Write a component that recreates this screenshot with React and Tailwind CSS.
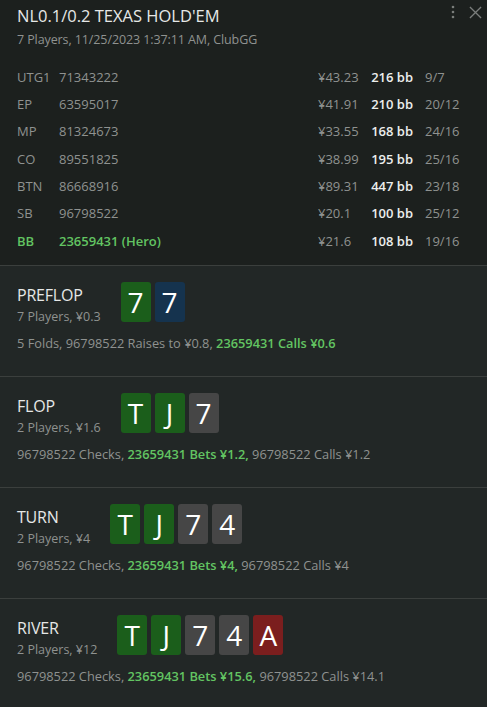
// App.jsx
import React from 'react'

const players = [
  { pos: 'UTG1', id: '71343222', stack: '¥43.23', bb: '216 bb', hands: '9/7' },
  { pos: 'EP', id: '63595017', stack: '¥41.91', bb: '210 bb', hands: '20/12' },
  { pos: 'MP', id: '81324673', stack: '¥33.55', bb: '168 bb', hands: '24/16' },
  { pos: 'CO', id: '89551825', stack: '¥38.99', bb: '195 bb', hands: '25/16' },
  { pos: 'BTN', id: '86668916', stack: '¥89.31', bb: '447 bb', hands: '23/18' },
  { pos: 'SB', id: '96798522', stack: '¥20.1', bb: '100 bb', hands: '25/12' },
  { pos: 'BB', id: '23659431 (Hero)', stack: '¥21.6', bb: '108 bb', hands: '19/16', hero: true },
]

const cardColors = {
  green: 'bg-[#1b5e1b]',
  blue: 'bg-[#15334e]',
  gray: 'bg-[#464646]',
  red: 'bg-[#7b1e1e]',
}

const streets = [
  {
    name: 'PREFLOP',
    info: '7 Players, ¥0.3',
    cards: [['7', 'green'], ['7', 'blue']],
    actions: [
      { text: '5 Folds, 96798522 Raises to ¥0.8, ' },
      { text: '23659431 Calls ¥0.6', hero: true },
    ],
  },
  {
    name: 'FLOP',
    info: '2 Players, ¥1.6',
    cards: [['T', 'green'], ['J', 'green'], ['7', 'gray']],
    actions: [
      { text: '96798522 Checks, ' },
      { text: '23659431 Bets ¥1.2,', hero: true },
      { text: ' 96798522 Calls ¥1.2' },
    ],
  },
  {
    name: 'TURN',
    info: '2 Players, ¥4',
    cards: [['T', 'green'], ['J', 'green'], ['7', 'gray'], ['4', 'gray']],
    actions: [
      { text: '96798522 Checks, ' },
      { text: '23659431 Bets ¥4,', hero: true },
      { text: ' 96798522 Calls ¥4' },
    ],
  },
  {
    name: 'RIVER',
    info: '2 Players, ¥12',
    cards: [['T', 'green'], ['J', 'green'], ['7', 'gray'], ['4', 'gray'], ['A', 'red']],
    actions: [
      { text: '96798522 Checks, ' },
      { text: '23659431 Bets ¥15.6,', hero: true },
      { text: ' 96798522 Calls ¥14.1' },
    ],
  },
]

function Card({ rank, color }) {
  return (
    <div className={`w-[30px] h-[40px] rounded-[3px] flex items-center justify-center text-white text-[28px] leading-none ${cardColors[color]}`}>
      {rank}
    </div>
  )
}

export default function App() {
  return (
    <div
      className="w-[487px] h-[707px] overflow-hidden bg-[#222726] text-[#9a9d9b]"
      style={{ fontFamily: '"Open Sans", "Noto Sans", sans-serif' }}
    >
      {/* header */}
      <div className="bg-[#1c201e] pl-[17px] pr-[4px] pt-[4px] pb-[10px] border-b border-[#3b3f3d]">
        <div className="flex items-start justify-between">
          <div>
            <h1 className="text-[16.5px] leading-[24px] text-[#e6e8e7]">NL0.1/0.2 TEXAS HOLD'EM</h1>
            <p className="text-[12.5px] leading-[18px] mt-[3px] tracking-[-0.1px] text-[#8f9290]">
              7 Players, 11/25/2023 1:37:11 AM, ClubGG
            </p>
          </div>
          <div className="flex items-center gap-[14px] pt-[1px] pr-[1px] text-[#7a7d7b]">
            <svg width="4" height="14" viewBox="0 0 4 14" fill="currentColor">
              <circle cx="2" cy="2" r="1.3" />
              <circle cx="2" cy="7" r="1.3" />
              <circle cx="2" cy="12" r="1.3" />
            </svg>
            <svg width="13" height="13" viewBox="0 0 14 14" stroke="currentColor" strokeWidth="1.4" fill="none">
              <path d="M1 1L13 13M13 1L1 13" />
            </svg>
          </div>
        </div>

        <div className="mt-[15px] mr-[12px] flex flex-col">
          {players.map((p) => (
            <div
              key={p.pos}
              className={`flex items-center h-[27.3px] text-[13px] ${p.hero ? 'text-[#62c462] font-semibold' : 'text-[#8f9290]'}`}
            >
              <span className="w-[42px]">{p.pos}</span>
              <span className="flex-1">{p.id}</span>
              <span className="w-[50px] text-[#8f9290] font-normal">{p.stack}</span>
              <span className="w-[45px] text-right text-[#eceeed] font-semibold">{p.bb}</span>
              <span className="w-[58px] pl-[12px] text-[#8f9290] font-normal">{p.hands}</span>
            </div>
          ))}
        </div>
      </div>

      {/* streets */}
      {streets.map((s) => (
        <div key={s.name} className="h-[111px] pl-[17px] pt-[16px] border-b border-[#3b3f3d]">
          <div className="flex items-start gap-[20px]">
            <div className="flex flex-col mt-[2px]">
              <span className="text-[16px] leading-[22px] text-[#e6e8e7] tracking-[-0.2px]">{s.name}</span>
              <span className="text-[12.5px] leading-[21px] text-[#8f9290]">{s.info}</span>
            </div>
            <div className="flex gap-[4px]">
              {s.cards.map(([r, c], i) => (
                <Card key={i} rank={r} color={c} />
              ))}
            </div>
          </div>
          <p className="mt-[7px] text-[12.8px] leading-[18px] text-[#8f9290]">
            {s.actions.map((a, i) => (
              <span key={i} className={a.hero ? 'text-[#62c462] font-semibold' : ''}>
                {a.text}
              </span>
            ))}
          </p>
        </div>
      ))}
    </div>
  )
}
